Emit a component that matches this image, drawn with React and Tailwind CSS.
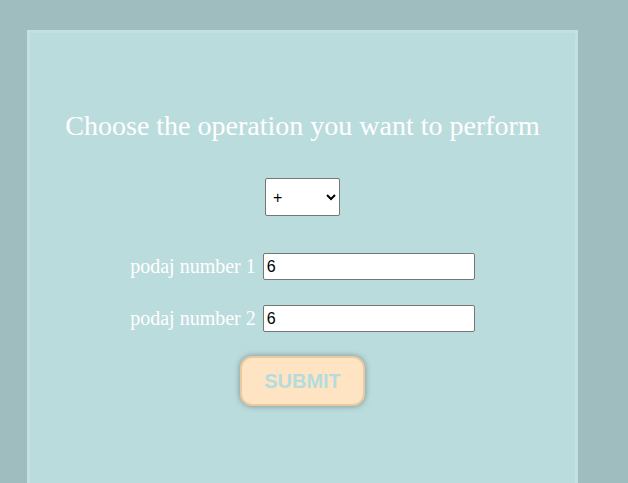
// kalkulator - wybór operacji
import React, { useState } from 'react'

export default function App() {
    const [op, setOp] = useState('+')
    const [a, setA] = useState('6')
    const [b, setB] = useState('6')

    return (
        <div className="h-screen overflow-hidden bg-[#9fbcbe] pt-[30px] pl-[27px] font-['Liberation_Serif',serif]">
            <div className="w-[551px] min-h-[470px] bg-[#bbdcdd] border-[3px] border-[#c3e1e2] flex flex-col items-center pt-[75px]">
                <h1 className="text-[28px] leading-[36px] text-white">
                    Choose the operation you want to perform
                </h1>

                <select
                    value={op}
                    onChange={(e) => setOp(e.target.value)}
                    className="mt-[34px] w-[75px] h-[38px] bg-white border border-[#767676] rounded-[2px] pl-[3px] text-[16px] text-black font-['Liberation_Sans',sans-serif]"
                >
                    <option>+</option>
                    <option>-</option>
                    <option>*</option>
                    <option>/</option>
                </select>

                {/* pola liczb */}
                <div className="mt-[37px] flex flex-col gap-[25px]">
                    <label className="flex items-center gap-[7px] text-[20px] leading-[27px] text-white">
                        <span>podaj number 1</span>
                        <input
                            value={a}
                            onChange={(e) => setA(e.target.value)}
                            className="w-[212px] h-[27px] bg-white border border-[#767676] rounded-[2px] px-[3px] text-[16px] text-black font-['Liberation_Sans',sans-serif]"
                        />
                    </label>
                    <label className="flex items-center gap-[7px] text-[20px] leading-[27px] text-white">
                        <span>podaj number 2</span>
                        <input
                            value={b}
                            onChange={(e) => setB(e.target.value)}
                            className="w-[212px] h-[27px] bg-white border border-[#767676] rounded-[2px] px-[3px] text-[16px] text-black font-['Liberation_Sans',sans-serif]"
                        />
                    </label>
                </div>

                <button
                    type="button"
                    className="mt-[24px] w-[125px] h-[50px] bg-[#ffe4c4] border-2 border-[#e9c9a0] rounded-[12px] shadow-[0_0_6px_rgba(0,0,0,0.35)] text-[20px] font-bold text-[#b5dcdd] font-['Liberation_Sans',sans-serif]"
                >
                    SUBMIT
                </button>
            </div>
        </div>
    )
}
